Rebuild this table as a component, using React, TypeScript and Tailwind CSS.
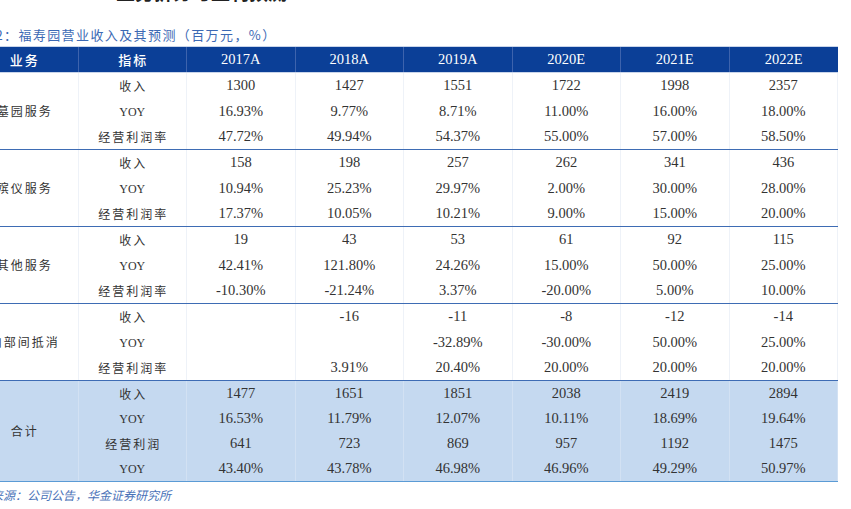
const years = ["2017A", "2018A", "2019A", "2020E", "2021E", "2022E"];

type Row = [string, string[]];
interface Group {
    name: string;
    rows: Row[];
}

const groups: Group[] = [
    {
        name: "墓园服务",
        rows: [
            ["收入", ["1300", "1427", "1551", "1722", "1998", "2357"]],
            ["YOY", ["16.93%", "9.77%", "8.71%", "11.00%", "16.00%", "18.00%"]],
            ["经营利润率", ["47.72%", "49.94%", "54.37%", "55.00%", "57.00%", "58.50%"]],
        ],
    },
    {
        name: "殡仪服务",
        rows: [
            ["收入", ["158", "198", "257", "262", "341", "436"]],
            ["YOY", ["10.94%", "25.23%", "29.97%", "2.00%", "30.00%", "28.00%"]],
            ["经营利润率", ["17.37%", "10.05%", "10.21%", "9.00%", "15.00%", "20.00%"]],
        ],
    },
    {
        name: "其他服务",
        rows: [
            ["收入", ["19", "43", "53", "61", "92", "115"]],
            ["YOY", ["42.41%", "121.80%", "24.26%", "15.00%", "50.00%", "25.00%"]],
            ["经营利润率", ["-10.30%", "-21.24%", "3.37%", "-20.00%", "5.00%", "10.00%"]],
        ],
    },
    {
        name: "内部间抵消",
        rows: [
            ["收入", ["", "-16", "-11", "-8", "-12", "-14"]],
            ["YOY", ["", "", "-32.89%", "-30.00%", "50.00%", "25.00%"]],
            ["经营利润率", ["", "3.91%", "20.40%", "20.00%", "20.00%", "20.00%"]],
        ],
    },
];

const total: Group = {
    name: "合计",
    rows: [
        ["收入", ["1477", "1651", "1851", "2038", "2419", "2894"]],
        ["YOY", ["16.53%", "11.79%", "12.07%", "10.11%", "18.69%", "19.64%"]],
        ["经营利润", ["641", "723", "869", "957", "1192", "1475"]],
        ["YOY", ["43.40%", "43.78%", "46.98%", "46.96%", "49.29%", "50.97%"]],
    ],
};

const cjk = "[font-family:'Noto_Sans_CJK_SC',sans-serif]";

function Text({ value }: { value: string }) {
    if (/[\u4e00-\u9fff]/.test(value)) {
        return <span className={`${cjk} text-[12px] tracking-[2px] pl-[2px]`}>{value}</span>;
    }
    if (value === "YOY") {
        return <span className="text-[12px]">{value}</span>;
    }
    return <span className="text-[14.5px]">{value}</span>;
}

function Cell({ value, line }: { value: string; line: string }) {
    return (
        <div className={`flex items-center justify-center border-r ${line}`}>
            <Text value={value} />
        </div>
    );
}

function GroupBlock({ group, isTotal }: { group: Group; isTotal?: boolean }) {
    const line = isTotal ? "border-[#d2e1f3]" : "border-[#eef2f8]";
    const rows = isTotal
        ? "grid-rows-[25px_25px_25px_25px] bg-[#c5d9f0] border-b border-[#5b9bd5]"
        : "grid-rows-[26px_25px_25px] border-b border-[#3e6cb4]";
    return (
        <div className={`grid grid-cols-[repeat(8,108.5px)] ${rows}`}>
            <div className={`${isTotal ? "row-span-4" : "row-span-3"} flex items-center justify-center border-r ${line}`}>
                <Text value={group.name} />
            </div>
            {group.rows.map(([label, values], i) => (
                <div key={i} className="contents">
                    <Cell value={label} line={line} />
                    {values.map((v, j) => (
                        <Cell key={j} value={v} line={line} />
                    ))}
                </div>
            ))}
        </div>
    );
}

export default function App() {
    return (
        <div className="w-[851px] h-[509px] overflow-hidden bg-white text-[#333] [font-family:'Liberation_Serif','Noto_Sans_CJK_SC',serif]">
            {/* clipped heading from the page above */}
            <div className="h-[5px] overflow-hidden">
                <div className={`${cjk} -mt-[20px] pl-[116px] text-[19px] font-bold leading-[24px] text-[#222]`}>
                    业务拆分与盈利预测
                </div>
            </div>

            <div className="h-[41px]">
                <div className={`${cjk} pt-[22px] -ml-[19px] text-[13px] leading-[16px] tracking-[1.4px] text-[#3c69b4] whitespace-nowrap`}>
                    表2：福寿园营业收入及其预测（百万元，%）
                </div>
            </div>

            <div className="-ml-[30px] w-[868px]">
                <div className="grid grid-cols-[repeat(8,108.5px)] h-[27px] border-t border-b border-[#c9d5ea] bg-[#0b3f97] text-white">
                    <div className="flex items-center justify-center border-r border-[#3d63ad]">
                        <span className={`${cjk} text-[13px] font-medium tracking-[2px] pl-[2px]`}>业务</span>
                    </div>
                    <div className="flex items-center justify-center border-r border-[#3d63ad]">
                        <span className={`${cjk} text-[13px] font-medium tracking-[2px] pl-[2px]`}>指标</span>
                    </div>
                    {years.map((y) => (
                        <div key={y} className="flex items-center justify-center border-r border-[#3d63ad] last:border-r-0 text-[14.5px]">
                            {y}
                        </div>
                    ))}
                </div>

                {groups.map((g) => (
                    <GroupBlock key={g.name} group={g} />
                ))}
                <GroupBlock group={total} isTotal />
            </div>

            <div className={`${cjk} pt-[5px] -ml-[33px] text-[12px] leading-[16px] italic text-[#4a72b8] whitespace-nowrap`}>
                资料来源：公司公告，华金证券研究所
            </div>
        </div>
    );
}
